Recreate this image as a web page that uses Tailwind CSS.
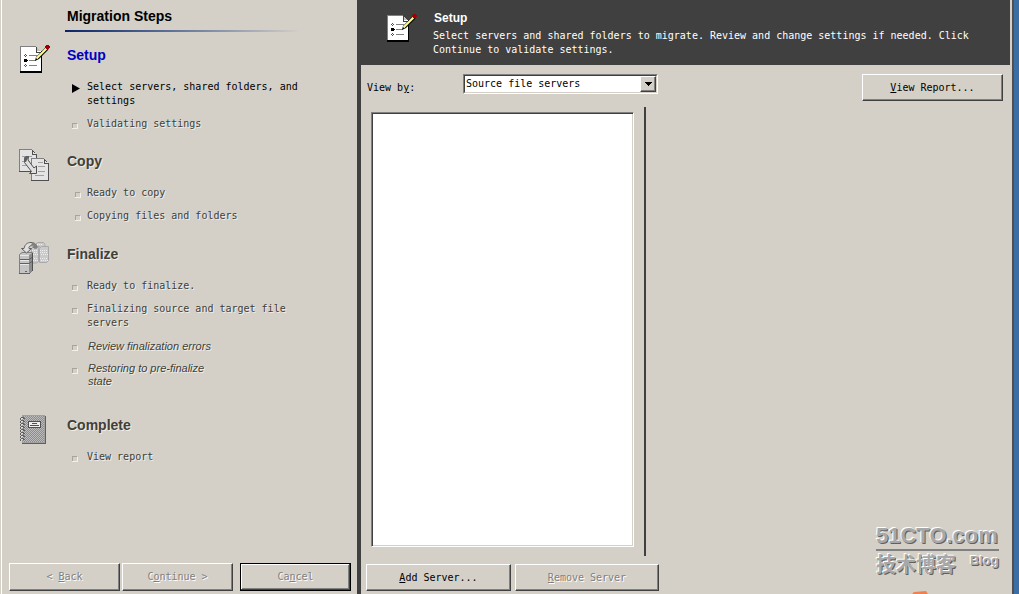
<!DOCTYPE html>
<html lang="en">
<head>
<meta charset="utf-8">
<title>Migration Steps</title>
<script src="https://cdn.jsdelivr.net/npm/@tailwindcss/browser@4"></script>
</head>
<body class="bg-[#d4d0c8] font-['DejaVu_Sans_Mono',monospace] text-[10px] leading-[14px] text-black">
<svg class="absolute size-0" aria-hidden="true">
  <symbol id="checklist" viewBox="0 0 32 32">
    <g shape-rendering="crispEdges">
      <path d="M2 3h16v1h1v1h1v1h1v1h1v1h1v20H2z" fill="#fff"/>
      <path d="M2 3h16v1H3v25H2z" fill="#808080"/>
      <path d="M2 28h22v2H2zM23 8h1v21h-1z" fill="#000"/>
      <path d="M18 4h1v5h5v1h-6z" fill="#404040"/>
      <path d="M19 5h1v1h1v1h1v1h-3z" fill="#c0c0c0"/>
      <path d="M11 12h8v1h-8zM11 17h7v1h-7zM11 22h8v1h-8z" fill="#808080"/>
      <path d="M7 11h1v1H7zM6 12h1v1H6zM8 12h1v1H8zM7 13h1v1H7zM7 21h1v1H7zM6 22h1v1H6zM8 22h1v1H8zM7 23h1v1H7z" fill="#505050"/>
      <path d="M6 16h3v1H6zM6 18h3v1H6zM6 17h4v1H6z" fill="#000"/>
    </g>
    <path d="M17 18 18 14 28 4l2.500 2.500L21 16z" fill="#000"/>
    <path d="M18.500 15.500 28.500 5.500" stroke="#ffff80" stroke-width="2.200"/>
    <path d="M28 2h3v1h1v2h-1v1h-3V5h-1V3h1z" fill="#a00000" shape-rendering="crispEdges"/>
  </symbol>
  <symbol id="copy" viewBox="0 0 32 32">
    <g shape-rendering="crispEdges">
      <path d="M1 0h13v1h1v1h1v1h1v1h1v1h1v18H1z" fill="#e4e4e4"/>
      <path d="M1 0h13v1H2v21H1z" fill="#808080"/>
      <path d="M1 22h18v1H1zM14 1h1v4h4v1h-5zM15 2h1v1h-1zM16 3h1v1h-1zM18 5h1v18h-1z" fill="#505050"/>
      <path d="M4 7h10v1H4zM4 12h8v1H4zM4 16h7v1H4z" fill="#a0a0a0"/>
      <path d="M13 9h13v1h1v1h1v1h1v1h1v1h1v18H13z" fill="#e4e4e4"/>
      <path d="M13 9h13v1H14v21h-1z" fill="#808080"/>
      <path d="M13 31h18v1H13zM26 10h1v4h4v1h-5zM27 11h1v1h-1zM28 12h1v1h-1zM30 14h1v18h-1z" fill="#505050"/>
      <path d="M20 13h5v1h-5zM20 17h7v1h-7zM20 22h7v1h-7zM17 26h9v1h-9z" fill="#a0a0a0"/>
    </g>
    <path d="M6.500 13.500V9L8 7.500h2.500L10 11l6 8 2.500-2v7.500h-7l2-2z" fill="#e0e0e0" stroke="#505050"/>
    <path d="M6 13V9l2-2h3l-1.500 3L8 13z" fill="#606060"/>
  </symbol>
  <symbol id="servers" viewBox="0 0 32 32">
    <g stroke="#a8a8a8" fill="#cacaca">
      <path d="M17.500 2.500 19.500.500h6l1.500 2v13h-9.500z"/>
      <path d="M13.500 6.500 15.500 4.500h6l-1 2v13l-2 1.500h-5z"/>
      <path d="M21.500 6.500 23.500 4.500h7v14l-2 2h-7z"/>
    </g>
    <g stroke="#eee" stroke-dasharray="1 1"><path d="M14 8.500h6M14 10.500h6M15 12.500h5M14 16.500h6M15 18.500h5M22 8.500h8M22 10.500h8M23 12.500h7M22 16.500h8M23 18.500h7M19 2.500h6"/></g>
    <path d="M1.500 12.500 4 10.500h10.500v18l-3 3h-10z" fill="#c4c4c4" stroke="#808080"/>
    <path d="M11 13 14 11v18l-3 2z" fill="#8c8c8c"/>
    <path d="M14.500 11v18" stroke="#505050"/>
    <path d="M2 13.500h9M2 18.500h9M2 22.500h9" stroke="#e8e8e8"/>
    <path d="M2 17.500h9l3-2M2 21.500h9l3-2M7 29.500h2M1 31.500h11" stroke="#606060" fill="none"/>
    <path d="M3.500 6.500H6C7 2 9.500.500 13 .500c4 0 6 2.500 6 5.500h-3c-.500-2-2-3-4-2-1.500 1-1 2-1 2.500h2.500L8.500 11z" fill="#e0e0e0" stroke="#606060"/>
    <path d="M14 1c4 0 5 2 5 5h-3c0-2-1-3-3-3z" fill="#808080"/>
  </symbol>
  <defs><pattern id="dither" width="2" height="2" patternUnits="userSpaceOnUse"><path d="M0 0h2v2H0z" fill="#bcbcbc"/><path d="M0 0h1v1H0zM1 1h1v1H1z" fill="#8c8c8c"/></pattern></defs>
  <symbol id="notebook" viewBox="0 0 32 32">
    <g shape-rendering="crispEdges">
      <path d="M4 3h24v28H4z" fill="#606060"/>
      <path d="M4 2h23v28H4z" fill="#a0a0a0"/>
      <path d="M5 3h21v26H5z" fill="url(#dither)"/>
      <path d="M10 8h13v7H10z" fill="#505050"/>
      <path d="M11 9h11v5H11z" fill="#eee"/>
      <path d="M14 10h5v1h-5zM12 12h9v1h-9z" fill="#505050"/>
      <path d="M3 4h3v1h1v1H3zM3 7h3v1h1v1H3zM3 10h3v1h1v1H3zM3 13h3v1h1v1H3zM3 16h3v1h1v1H3zM3 19h3v1h1v1H3zM3 22h3v1h1v1H3zM3 25h3v1h1v1H3z" fill="#606060"/>
      <path d="M2 5h1v2H2zM2 8h1v2H2zM2 11h1v2H2zM2 14h1v2H2zM2 17h1v2H2zM2 20h1v2H2zM2 23h1v2H2zM2 26h1v2H2z" fill="#606060"/>
      <path d="M3 5h2v1H3zM3 8h2v1H3zM3 11h2v1H3zM3 14h2v1H3zM3 17h2v1H3zM3 20h2v1H3zM3 23h2v1H3zM3 26h2v1H3z" fill="#ddd"/>
    </g>
  </symbol>
  <symbol id="square" viewBox="0 0 6 6">
    <g shape-rendering="crispEdges"><path d="M0 0h5v1H1v4H0z" fill="#a8a49c"/><path d="M5 1h1v5H0V5h5z" fill="#f2f0ea"/></g>
  </symbol>
</svg>

<div class="flex min-h-screen">
  <aside class="flex w-[357px] shrink-0 flex-col border-l border-[#d4d0c8]">
    <div class="flex grow flex-col border-l border-white">
      <header class="ml-[63px] w-[235px] pt-1.5">
        <h1 class="h-6 pl-0.5 font-['Liberation_Sans',sans-serif] text-[14px] leading-5 font-bold">Migration Steps</h1>
        <div class="h-0.5 bg-linear-to-r from-[#0a246a] to-[#d4d0c8]"></div>
      </header>

      <ol class="mt-[11px] grow text-[#404038] [text-shadow:1px_1px_0_#f0eee8]">
        <li class="flex pl-4">
          <svg class="mr-[17px] size-8 shrink-0"><use href="#checklist"/></svg>
          <div class="pt-0.5">
            <h2 class="font-['Liberation_Sans',sans-serif] text-[14px] leading-5 font-bold text-[#0000c0] [text-shadow:none]">Setup</h2>
            <ul class="mt-[15px] flex flex-col gap-[9px] pl-[5px]">
              <li class="flex text-black [text-shadow:none]"><svg class="mt-1 mr-[7px] h-[9px] w-2 shrink-0" viewBox="0 0 8 9"><path d="M0 0v9l8-4.500z"/></svg><span class="w-[220px]">Select servers, shared folders, and settings</span></li>
              <li class="flex"><svg class="mt-1.5 mr-[9px] size-1.5 shrink-0"><use href="#square"/></svg><span>Validating settings</span></li>
            </ul>
          </div>
        </li>
        <li class="mt-[18px] flex pl-4">
          <svg class="mr-[17px] size-8 shrink-0"><use href="#copy"/></svg>
          <div class="pt-0.5">
            <h2 class="font-['Liberation_Sans',sans-serif] text-[14px] leading-5 font-bold">Copy</h2>
            <ul class="mt-[15px] flex flex-col gap-[9px] pl-2">
              <li class="flex"><svg class="mt-1.5 mr-1.5 size-1.5 shrink-0"><use href="#square"/></svg><span>Ready to copy</span></li>
              <li class="flex"><svg class="mt-1.5 mr-1.5 size-1.5 shrink-0"><use href="#square"/></svg><span>Copying files and folders</span></li>
            </ul>
          </div>
        </li>
        <li class="mt-[19px] flex pl-4">
          <svg class="mr-[17px] size-8 shrink-0"><use href="#servers"/></svg>
          <div class="pt-0.5">
            <h2 class="font-['Liberation_Sans',sans-serif] text-[14px] leading-5 font-bold">Finalize</h2>
            <ul class="mt-[15px] flex flex-col gap-[9px] pl-[5px]">
              <li class="flex"><svg class="mt-1.5 mr-[9px] size-1.5 shrink-0"><use href="#square"/></svg><span>Ready to finalize.</span></li>
              <li class="flex"><svg class="mt-1.5 mr-[9px] size-1.5 shrink-0"><use href="#square"/></svg><span class="w-[210px]">Finalizing source and target file servers</span></li>
              <li class="flex font-['Liberation_Sans',sans-serif] text-[11px] italic"><svg class="mt-1.5 mr-[9px] size-1.5 shrink-0"><use href="#square"/></svg><span class="pl-px">Review finalization errors</span></li>
              <li class="flex font-['Liberation_Sans',sans-serif] text-[11px] leading-[13px] italic"><svg class="mt-1.5 mr-[9px] size-1.5 shrink-0"><use href="#square"/></svg><span class="w-[136px] pl-px">Restoring to pre-finalize state</span></li>
            </ul>
          </div>
        </li>
        <li class="mt-[25px] flex pl-4">
          <svg class="mr-[17px] size-8 shrink-0"><use href="#notebook"/></svg>
          <div class="pt-0.5">
            <h2 class="font-['Liberation_Sans',sans-serif] text-[14px] leading-5 font-bold">Complete</h2>
            <ul class="mt-[15px] flex flex-col gap-[9px] pl-[5px]">
              <li class="flex"><svg class="mt-1.5 mr-[9px] size-1.5 shrink-0"><use href="#square"/></svg><span>View report</span></li>
            </ul>
          </div>
        </li>
      </ol>

      <div class="flex pr-1.5 pb-[3px] pl-[7px] text-[#808080] [text-shadow:1px_1px_0_#fff]">
        <button disabled class="h-7 flex-1 border border-t-white border-r-[#404040] border-b-[#404040] border-l-white shadow-[inset_-1px_-1px_0_#808080] [text-shadow:inherit]">&lt; <u>B</u>ack</button>
        <button disabled class="ml-0.5 h-7 flex-1 border border-t-white border-r-[#404040] border-b-[#404040] border-l-white shadow-[inset_-1px_-1px_0_#808080] [text-shadow:inherit]">C<u>o</u>ntinue &gt;</button>
        <button disabled class="ml-[7px] h-7 flex-1 border border-black shadow-[inset_-1px_-1px_0_#404040,inset_1px_1px_0_#fff,inset_-2px_-2px_0_#808080] [text-shadow:inherit]">Ca<u>n</u>cel</button>
      </div>
    </div>
  </aside>

  <main class="relative flex min-w-0 grow flex-col border-l-4 border-[#404040]">
    <header class="mr-0.5 flex h-[65px] bg-[#404040] pt-3 pl-[24px] text-white">
      <svg class="mr-4 size-8 shrink-0"><use href="#checklist"/></svg>
      <div class="-mt-0.5">
        <h2 class="h-[19px] pl-px font-['Liberation_Sans',sans-serif] text-[12px] leading-4 font-bold">Setup</h2>
        <p class="max-w-[552px]">Select servers and shared folders to migrate. Review and change settings if needed. Click Continue to validate settings.</p>
      </div>
    </header>

    <div class="flex items-start pt-[9px] pr-[9px] pl-1.5">
      <label for="view" class="mt-[7px] w-24">View b<u>y</u>:</label>
      <div class="relative w-[195px] border border-t-[#808080] border-r-white border-b-white border-l-[#808080]">
        <select id="view" class="block h-[18px] w-full appearance-none rounded-none border border-t-[#404040] border-r-[#d4d0c8] border-b-[#d4d0c8] border-l-[#404040] bg-white pl-px leading-4 outline-none">
          <option>Source file servers</option>
        </select>
        <span class="pointer-events-none absolute top-px right-px flex h-4 w-4 items-center justify-center border border-t-white border-r-[#404040] border-b-[#404040] border-l-white bg-[#d4d0c8] shadow-[inset_-1px_-1px_0_#808080]"><svg class="h-1 w-[7px]" viewBox="0 0 7 4" shape-rendering="crispEdges"><path d="M0 0h7v1H6v1H5v1H4v1H3V3H2V2H1V1H0z"/></svg></span>
      </div>
      <button class="ml-auto h-[27px] w-[141px] border border-t-white border-r-[#404040] border-b-[#404040] border-l-white shadow-[inset_-1px_-1px_0_#808080]"><u>V</u>iew Report...</button>
    </div>

    <section class="flex grow flex-col">
      <div class="flex grow pt-1.5">
        <div role="listbox" aria-label="Servers" class="mt-[5px] mb-[9px] ml-2.5 w-[263px] border border-t-[#808080] border-r-white border-b-white border-l-[#808080] bg-white shadow-[inset_1px_1px_0_#404040,inset_-1px_-1px_0_#d4d0c8]"></div>
        <div class="ml-2.5 w-0.5 bg-[#404040]"></div>
      </div>
      <div class="mt-2 flex gap-1 pb-[3px] pl-[5px]">
        <button class="h-[27px] w-[145px] border border-t-white border-r-[#404040] border-b-[#404040] border-l-white shadow-[inset_-1px_-1px_0_#808080]"><u>A</u>dd Server...</button>
        <button disabled class="h-[27px] w-36 border border-t-white border-r-[#404040] border-b-[#404040] border-l-white text-[#808080] shadow-[inset_-1px_-1px_0_#808080] [text-shadow:1px_1px_0_#fff]"><u>R</u>emove Server</button>
      </div>
    </section>

    <div class="absolute right-[13px] bottom-[17px] w-[123px] text-[#a8a8a8] [text-shadow:-1px_-1px_0_#fff,1px_1px_0_#606060]">
      <div class="h-[29px] border-b-2 border-[#808080] font-['Liberation_Sans',sans-serif] text-[22px] leading-7 font-bold">51CTO.com</div>
      <div class="flex items-start justify-between font-bold">
        <span class="font-['Noto_Sans_CJK_SC',sans-serif] text-[20px] leading-[26px]">技术博客</span>
        <span class="font-['Liberation_Sans',sans-serif] text-[13px] leading-5">Blog</span>
      </div>
    </div>
    <svg class="absolute right-[84px] bottom-0 h-[3px] w-4" viewBox="0 0 16 3"><path d="M0 3 2 1 14 0l2 3z" fill="#f08050"/></svg>
  </main>
  <div class="w-[7px] shrink-0 border-l-2 border-[#505050] bg-[#3a6ea5]"></div>
</div>
</body>
</html>
